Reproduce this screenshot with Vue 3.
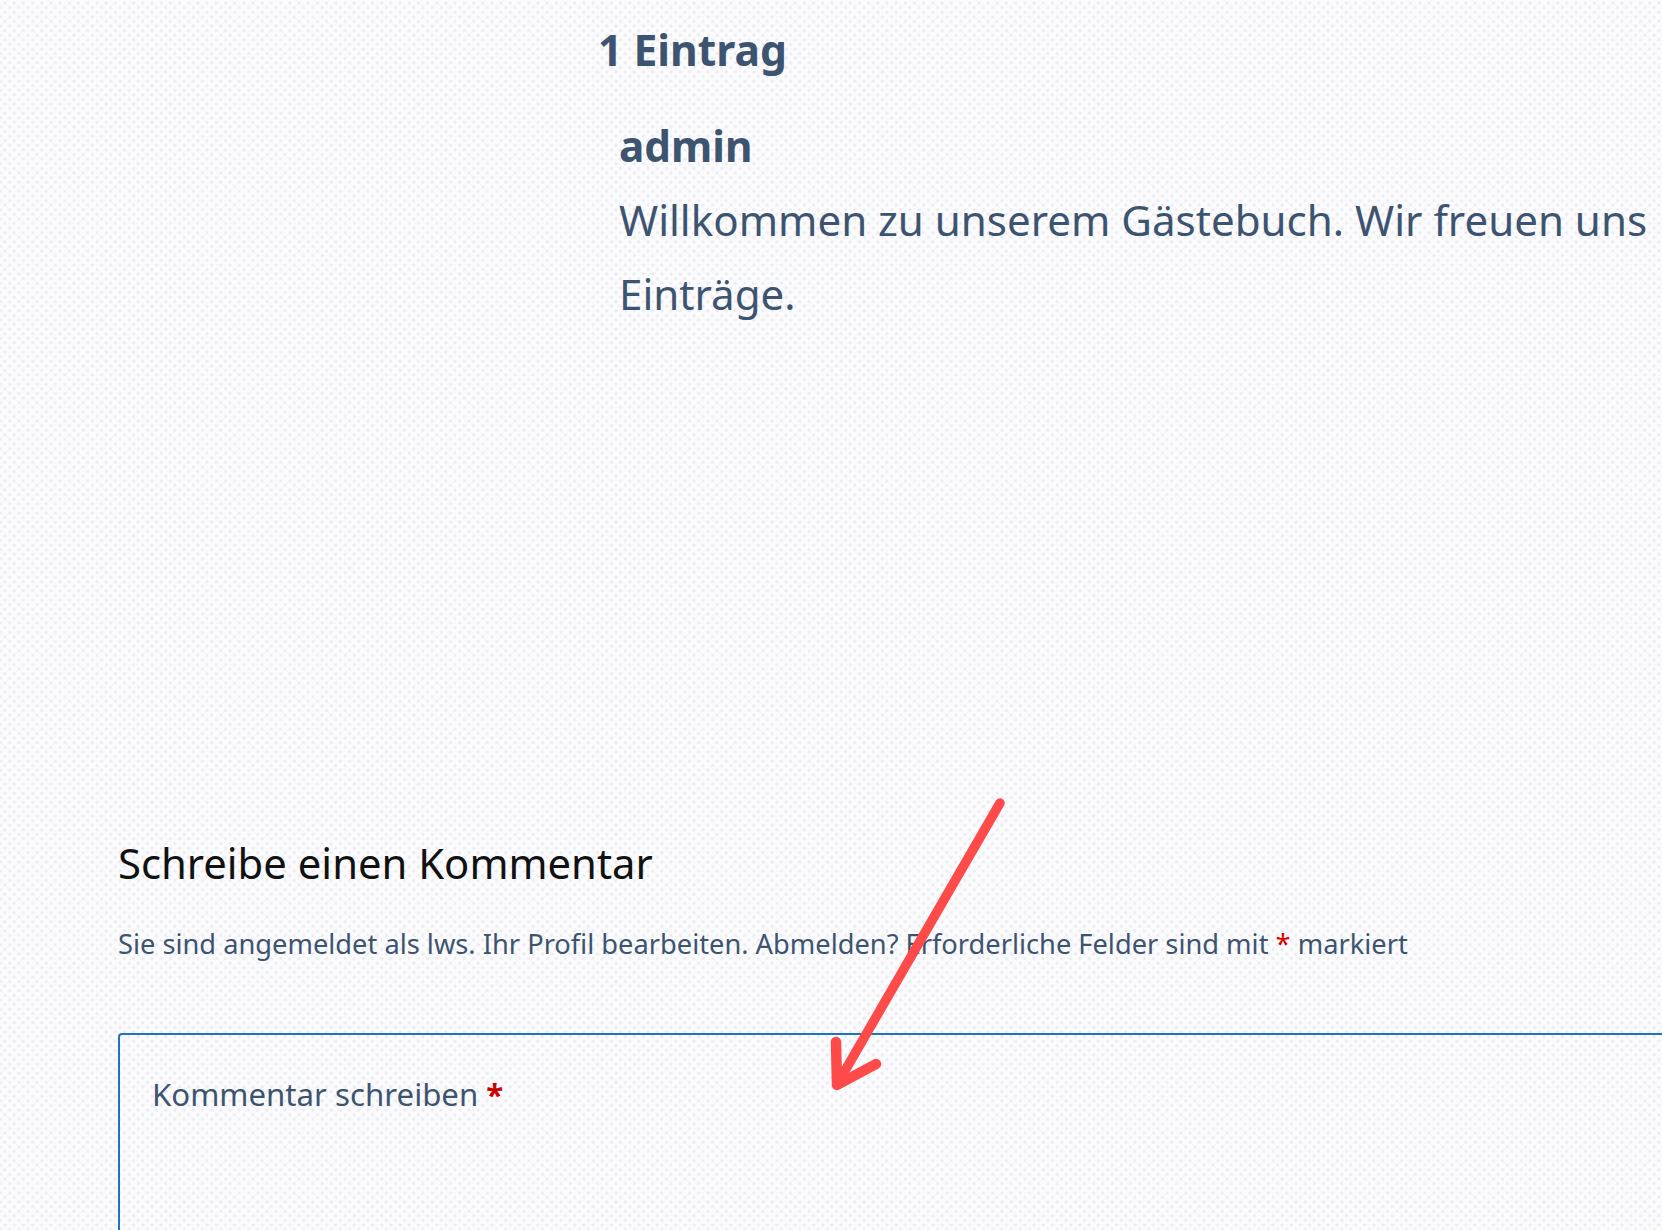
<script setup>
const requiredMark = '*'
</script>

<template>
  <main class="page">
    <section class="entries">
      <h2 class="count">1 Eintrag</h2>
      <article class="entry">
        <div class="author">admin</div>
        <p class="message">Willkommen zu unserem Gästebuch. Wir freuen uns<br />Einträge.</p>
      </article>
    </section>
    <section class="respond">
      <h3 class="reply-title">Schreibe einen Kommentar</h3>
      <p class="logged">Sie sind angemeldet als lws. Ihr Profil bearbeiten. Abmelden? Erforderliche Felder sind mit <span class="req">{{ requiredMark }}</span> markiert</p>
      <div class="field">
        <label class="field-label">Kommentar schreiben <span class="star">{{ requiredMark }}</span></label>
      </div>
    </section>
    <svg class="arrow" width="185" height="300" viewBox="0 0 185 300" fill="none" stroke="#ff4a4a" stroke-linecap="round" stroke-linejoin="round" aria-hidden="true">
      <path d="M175 8 L14 286" stroke-width="9.5" />
      <path d="M11 247 L12 290 L51 269" stroke-width="10.5" />
    </svg>
  </main>
</template>

<style scoped>
.page {
  position: relative;
  height: 1230px;
  overflow: hidden;
  color: #3d5470;
  font-family: "Noto Sans", "Open Sans", sans-serif;
  background-color: #fbfbfd;
  background-image:
    radial-gradient(circle at center, #e9ebef 0, #e9ebef 1.2px, transparent 1.8px),
    radial-gradient(circle at center, #e9ebef 0, #e9ebef 1.2px, transparent 1.8px);
  background-size: 9.2px 9.2px;
  background-position: 0.4px -1.6px, 5px 3px;
}
.entries { padding: 21px 0 0 598px; }
.count { margin: 0; font-size: 42.6px; line-height: 56px; font-weight: 700; }
.entry { padding: 32px 0 0 21px; }
.author { font-size: 42.3px; line-height: 74px; font-weight: 700; }
.message { margin: 0; white-space: nowrap; font-size: 42.1px; line-height: 74px; }
.respond { padding: 502px 0 0 118px; }
.reply-title { margin: 0; color: #111; font-size: 41.8px; line-height: 60px; font-weight: 400; }
.logged { margin: 28.6px 0 0; font-size: 27.25px; line-height: 44px; }
.req { color: #d00; }
.field {
  margin: 67px -20px 0 0;
  height: 300px;
  padding: 34px 32px;
  box-sizing: border-box;
  border: 2px solid #1e73be;
  border-radius: 4px;
}
.field-label { font-size: 31.2px; line-height: 50px; }
.star { color: #c00; font-weight: 700; }
.arrow { position: absolute; left: 825px; top: 795px; }
</style>
